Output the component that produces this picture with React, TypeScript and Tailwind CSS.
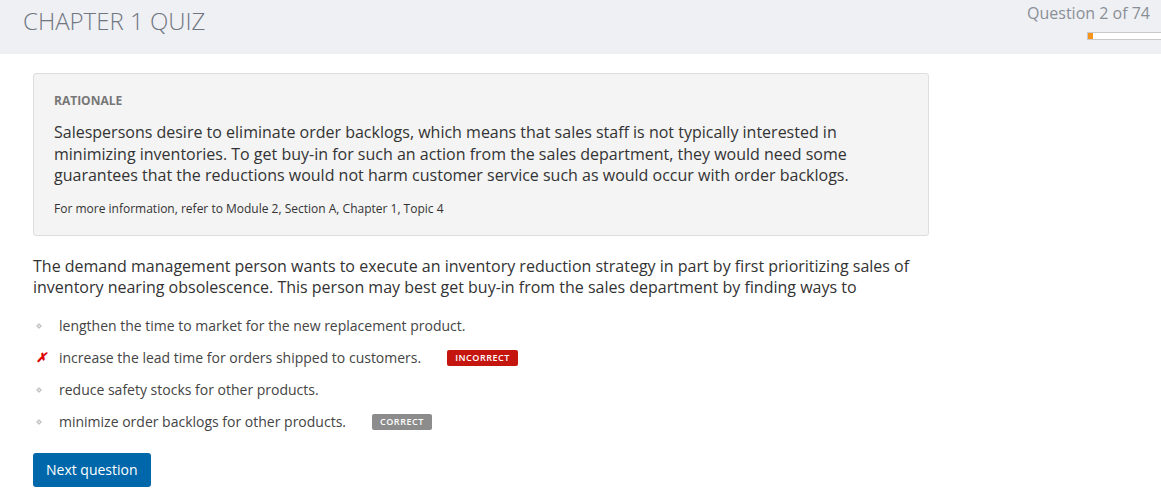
import React from 'react';

type Option = { text: string; state?: 'incorrect' | 'correct' };

const options: Option[] = [
  { text: 'lengthen the time to market for the new replacement product.' },
  { text: 'increase the lead time for orders shipped to customers.', state: 'incorrect' },
  { text: 'reduce safety stocks for other products.' },
  { text: 'minimize order backlogs for other products.', state: 'correct' },
];

const Badge: React.FC<{ kind: 'incorrect' | 'correct' }> = ({ kind }) => (
  <span
    className={`ml-[26px] inline-flex h-[16px] items-center rounded-[2px] px-[8px] text-[9px] font-semibold tracking-[0.06em] text-white ${
      kind === 'incorrect' ? 'bg-[#c4150f]' : 'bg-[#8c8c8c]'
    }`}
  >
    {kind === 'incorrect' ? 'INCORRECT' : 'CORRECT'}
  </span>
);

export default function App() {
  return (
    <div className="min-h-[494px] bg-white font-['Open_Sans',sans-serif] text-[#333]">
      <header className="flex h-[54px] items-start justify-between bg-[#eff0f4]">
        <h1 className="pl-[23px] pt-[5px] text-[24px] font-light leading-[32px] text-[#6f7680]">CHAPTER 1 QUIZ</h1>
        <div className="flex flex-col items-end">
          <div className="pr-[11px] pt-[2px] text-[16px] leading-[22px] text-[#8a8f96]">Question 2 of 74</div>
          <div className="mt-[8px] h-[8px] w-[74px] border border-r-0 border-[#c9c9c9] bg-white">
            <div className="h-full w-[5px] bg-[#f7941d]" />
          </div>
        </div>
      </header>

      <main className="px-[33px] pt-[19px]">
        <section className="w-[896px] rounded-[3px] border border-[#dedede] bg-[#f4f4f4] px-[20px] pb-[18px] pt-[18px]">
          <div className="text-[12px] font-bold leading-[18px] text-[#777]">RATIONALE</div>
          <p className="mt-[12px] text-[16px] leading-[21.5px] text-[#333]">
            Salespersons desire to eliminate order backlogs, which means that sales staff is not typically interested in
            minimizing inventories. To get buy-in for such an action from the sales department, they would need some
            guarantees that the reductions would not harm customer service such as would occur with order backlogs.
          </p>
          <p className="mt-[13px] text-[12px] leading-[17px] text-[#333]">
            For more information, refer to Module 2, Section A, Chapter 1, Topic 4
          </p>
        </section>

        <p className="mt-[20px] w-[900px] text-[16px] leading-[21.5px] text-[#333]">
          The demand management person wants to execute an inventory reduction strategy in part by first prioritizing sales of
          inventory nearing obsolescence. This person may best get buy-in from the sales department by finding ways to
        </p>

        <ul className="mt-[17px] flex flex-col gap-[12px]">
          {options.map((o, i) => (
            <li key={i} className="flex h-[20px] items-center text-[14px] text-[#444]">
              <span className="flex w-[26px] items-center justify-start">
                {o.state === 'incorrect' ? (
                  <span className="pl-[3px] text-[13px] font-bold italic leading-none text-[#e00000]">✗</span>
                ) : (
                  <span className="ml-[4px] h-[4px] w-[4px] rotate-45 border border-[#bdbdbd] bg-[#e6e6e6]" />
                )}
              </span>
              <span>{o.text}</span>
              {o.state && <Badge kind={o.state} />}
            </li>
          ))}
        </ul>

        <button className="mt-[21px] h-[34px] rounded-[3px] bg-[#0067ab] px-[13px] text-[14px] text-white">
          Next question
        </button>
      </main>
    </div>
  );
}
